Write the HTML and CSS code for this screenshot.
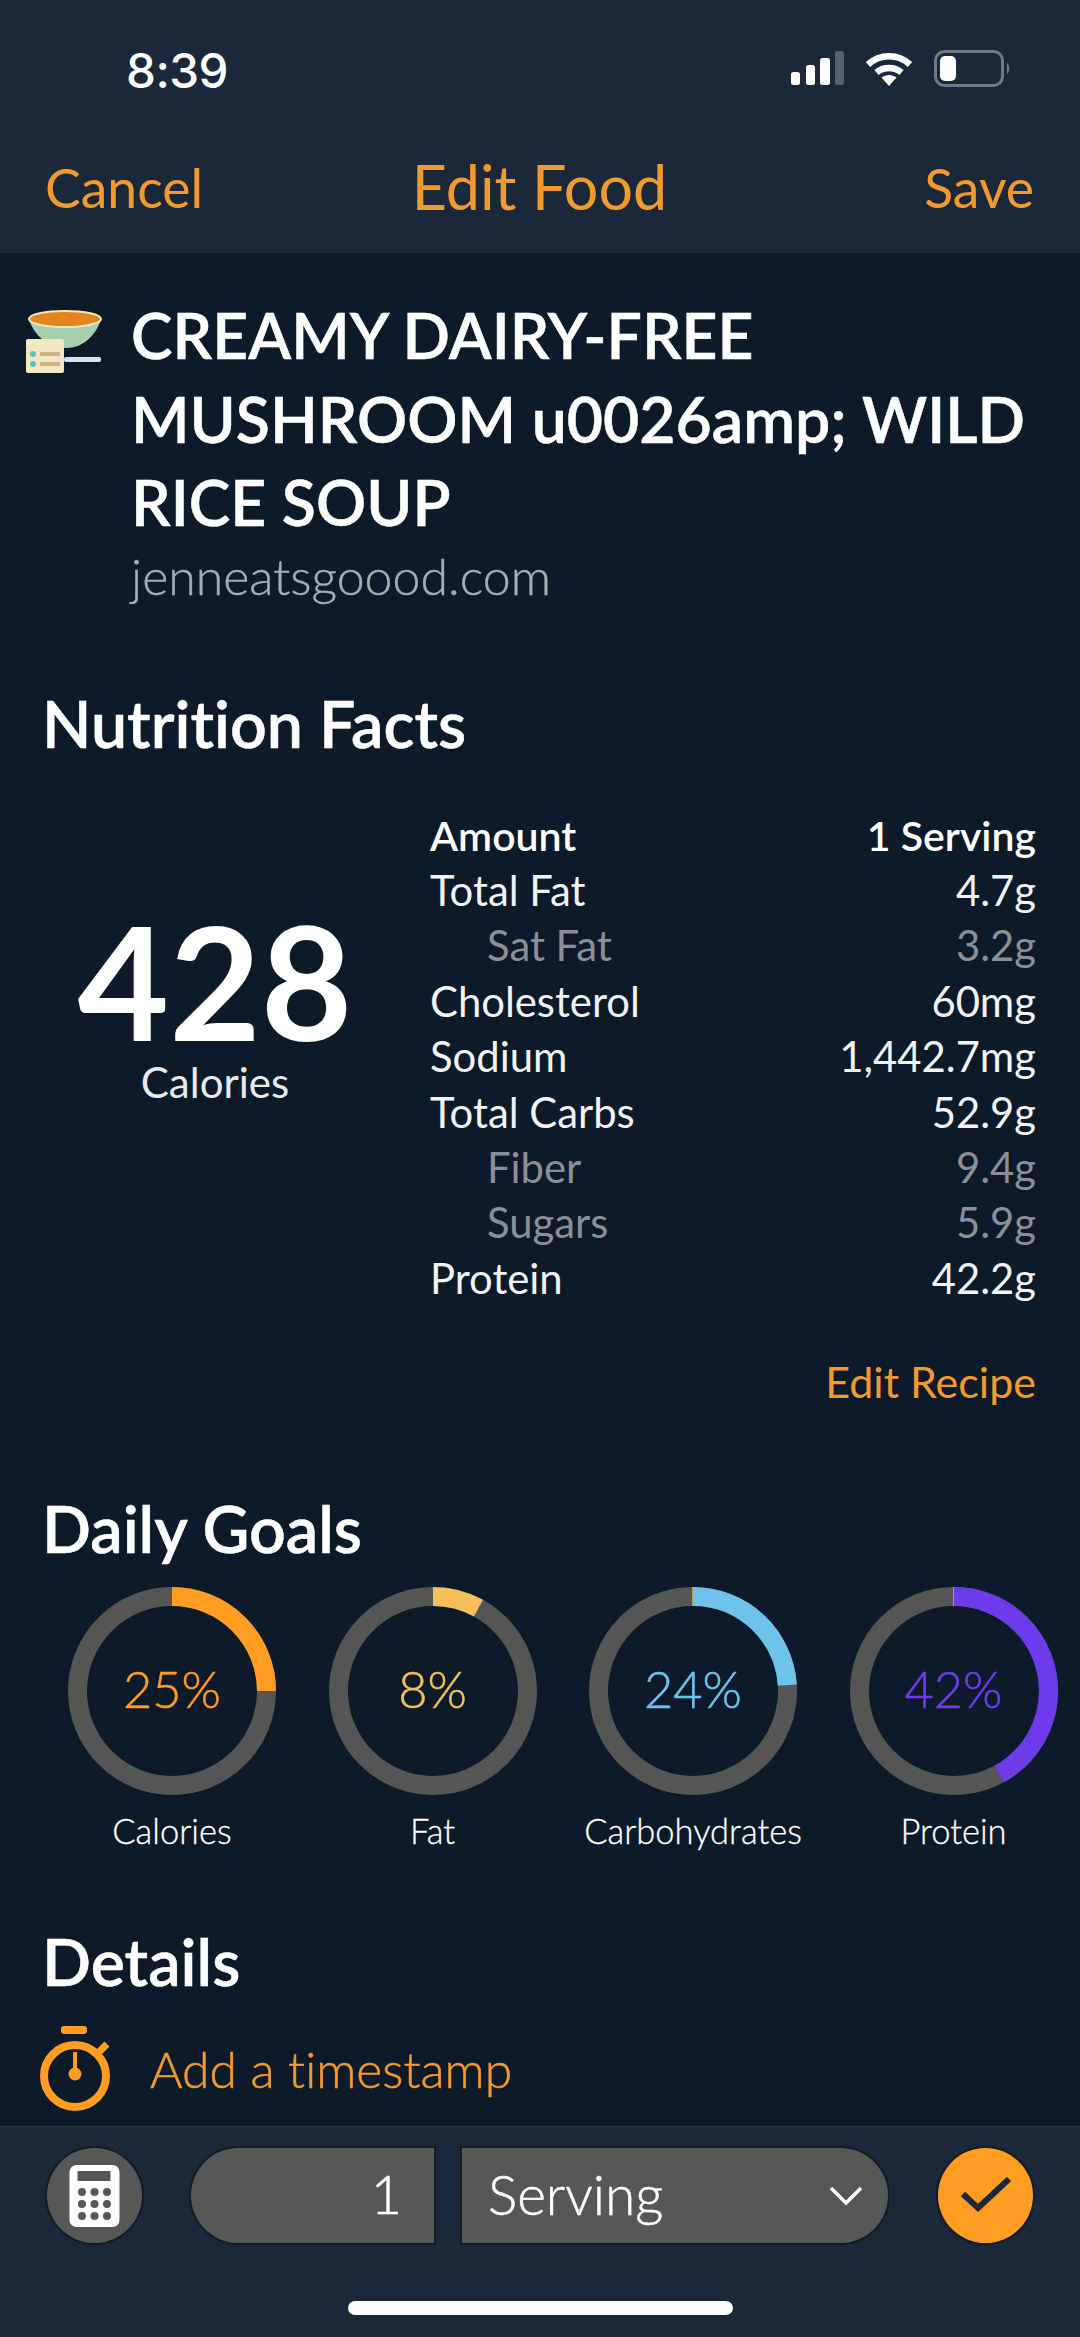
FILE: index.html
```html
<!DOCTYPE html>
<html lang="en">
<head>
<meta charset="utf-8">
<title>Edit Food</title>
<link rel="stylesheet" href="styles.css">
</head>
<body>
<div class="screen">
  <header class="top">
    <div class="status">
      <span class="time">8:39</span>
      <div class="status-icons">
        <svg class="signal" width="53" height="36" viewBox="0 0 53 36"><rect x="0" y="21" width="9" height="13" rx="2.5" fill="#fff"/><rect x="15" y="14" width="9" height="20" rx="2.5" fill="#fff"/><rect x="29" y="7" width="10" height="27" rx="2.5" fill="#fff"/><rect x="44" y="0" width="9" height="34" rx="2.5" fill="#56626f"/></svg>
        <svg class="wifi" width="48" height="36" viewBox="0 0 48 36"><path d="M3 13.500C15 2.500 33 2.500 45 13.500" fill="none" stroke="#fff" stroke-width="6.500"/><path d="M11.500 21.500C18.500 15.500 29.500 15.500 36.500 21.500" fill="none" stroke="#fff" stroke-width="6.500"/><path d="M16.500 26.500C21 23 27 23 31.500 26.500L24 35Z" fill="#fff"/></svg>
        <svg class="battery" width="77" height="38" viewBox="0 0 77 38"><rect x="1.500" y="1.500" width="67" height="34" rx="9" fill="none" stroke="#6f7a87" stroke-width="3"/><rect x="6" y="6" width="16" height="25" rx="5" fill="#fff"/><path d="M73 13C76 15 76 22 73 24Z" fill="#6f7a87"/></svg>
      </div>
    </div>
    <nav class="nav">
      <span class="nav-side">Cancel</span>
      <span class="nav-title">Edit Food</span>
      <span class="nav-side nav-right">Save</span>
    </nav>
  </header>

  <main class="content">
    <section class="recipe">
      <svg class="bowl" width="90" height="66" viewBox="0 0 90 66">
        <path d="M3 12C9 28 22 40 40 40C57 40 69 28 75 12Z" fill="#a6cfae"/>
        <ellipse cx="39" cy="11" rx="36" ry="8" fill="#e2851c" stroke="#f3e6bd" stroke-width="2"/>
        <rect x="38" y="49" width="37" height="5" rx="2" fill="#d6e2ee"/>
        <rect x="0" y="31" width="38" height="34" rx="2" fill="#f3e7c6"/>
        <circle cx="7" cy="46" r="3" fill="#5cc0c4"/><circle cx="7" cy="56" r="3" fill="#5cc0c4"/>
        <rect x="14" y="44" width="20" height="4" fill="#cdb57f"/><rect x="14" y="54" width="20" height="4" fill="#cdb57f"/>
      </svg>
      <div class="recipe-text">
        <h1 class="recipe-title">CREAMY DAIRY-FREE MUSHROOM u0026amp; WILD RICE SOUP</h1>
        <p class="recipe-source">jenneatsgoood.com</p>
      </div>
    </section>

    <h2 class="heading heading-facts">Nutrition Facts</h2>
    <section class="facts">
      <div class="calories">
        <span class="cal-num">428</span>
        <span class="cal-label">Calories</span>
      </div>
      <div class="table">
        <div class="row row-head"><span>Amount</span><span>1 Serving</span></div>
        <div class="row"><span>Total Fat</span><span>4.7g</span></div>
        <div class="row row-sub"><span>Sat Fat</span><span>3.2g</span></div>
        <div class="row"><span>Cholesterol</span><span>60mg</span></div>
        <div class="row"><span>Sodium</span><span>1,442.7mg</span></div>
        <div class="row"><span>Total Carbs</span><span>52.9g</span></div>
        <div class="row row-sub"><span>Fiber</span><span>9.4g</span></div>
        <div class="row row-sub"><span>Sugars</span><span>5.9g</span></div>
        <div class="row"><span>Protein</span><span>42.2g</span></div>
      </div>
    </section>
    <div class="edit-recipe">Edit Recipe</div>

    <h2 class="heading heading-goals">Daily Goals</h2>
    <section class="goals">
      <div class="goal">
        <div class="ring">
          <svg width="208" height="208" viewBox="0 0 208 208"><circle class="track" cx="104" cy="104" r="94.500"/><circle class="arc" cx="104" cy="104" r="94.500" pathLength="100" stroke="#ff9c22" stroke-dasharray="25 100" transform="rotate(-90 104 104)"/></svg>
          <span class="pct pct-cal">25%</span>
        </div>
        <span class="goal-label">Calories</span>
      </div>
      <div class="goal">
        <div class="ring">
          <svg width="208" height="208" viewBox="0 0 208 208"><circle class="track" cx="104" cy="104" r="94.500"/><circle class="arc" cx="104" cy="104" r="94.500" pathLength="100" stroke="#f5bf5a" stroke-dasharray="8 100" transform="rotate(-90 104 104)"/></svg>
          <span class="pct pct-fat">8%</span>
        </div>
        <span class="goal-label">Fat</span>
      </div>
      <div class="goal">
        <div class="ring">
          <svg width="208" height="208" viewBox="0 0 208 208"><circle class="track" cx="104" cy="104" r="94.500"/><circle class="arc" cx="104" cy="104" r="94.500" pathLength="100" stroke="#6ec3ec" stroke-dasharray="24 100" transform="rotate(-90 104 104)"/><path class="tick" d="M103.500 0V19"/></svg>
          <span class="pct pct-carb">24%</span>
        </div>
        <span class="goal-label">Carbohydrates</span>
      </div>
      <div class="goal">
        <div class="ring">
          <svg width="208" height="208" viewBox="0 0 208 208"><circle class="track" cx="104" cy="104" r="94.500"/><circle class="arc" cx="104" cy="104" r="94.500" pathLength="100" stroke="#6e3bea" stroke-dasharray="42 100" transform="rotate(-90 104 104)"/><path class="tick" d="M103.500 0V19"/></svg>
          <span class="pct pct-pro">42%</span>
        </div>
        <span class="goal-label">Protein</span>
      </div>
    </section>

    <h2 class="heading heading-details">Details</h2>
    <div class="timestamp">
      <svg class="watch" width="74" height="86" viewBox="0 0 74 86">
        <rect x="23" y="0" width="26" height="8" rx="3" fill="#ff9c22"/>
        <circle cx="37" cy="50" r="31" fill="none" stroke="#ff9c22" stroke-width="8"/>
        <path d="M61 26L69 18" stroke="#ff9c22" stroke-width="7" fill="none"/>
        <rect x="35" y="26" width="4" height="22" fill="#ff9c22"/>
        <circle cx="37" cy="48" r="6.500" fill="#ff9c22"/>
      </svg>
      <span class="timestamp-text">Add a timestamp</span>
    </div>
  </main>

  <footer class="bottom">
    <div class="controls">
      <div class="round calc">
        <svg width="51" height="62" viewBox="0 0 50 62">
          <rect width="50" height="62" rx="7" fill="#fff"/>
          <rect x="8" y="6" width="33" height="10" fill="#575757"/>
          <g fill="#575757">
            <circle cx="12.500" cy="27" r="4"/><circle cx="25" cy="27" r="4"/><circle cx="37.500" cy="27" r="4"/>
            <circle cx="12.500" cy="39" r="4"/><circle cx="25" cy="39" r="4"/><circle cx="37.500" cy="39" r="4"/>
            <circle cx="12.500" cy="51" r="4"/><circle cx="25" cy="51" r="4"/><circle cx="37.500" cy="51" r="4"/>
          </g>
        </svg>
      </div>
      <div class="qty">1</div>
      <div class="unit">
        <span class="unit-text">Serving</span>
        <svg width="34" height="22" viewBox="0 0 34 22"><path d="M2 3L17 18L32 3" fill="none" stroke="#fff" stroke-width="3.500"/></svg>
      </div>
      <div class="round confirm">
        <svg width="52" height="40" viewBox="0 0 52 40"><path d="M3 18L18 32L49 3" fill="none" stroke="#1a2839" stroke-width="6"/></svg>
      </div>
    </div>
    <div class="home-bar"></div>
  </footer>
</div>
</body>
</html>
```
FILE: styles.css
```css
* { box-sizing: border-box; margin: 0; padding: 0; }
html, body { width: 1080px; height: 2337px; overflow: hidden; }
body { background: #0d1a2a; font-family: "Lato", "Liberation Sans", sans-serif; color: #fff; font-variant-ligatures: none; }
.screen { width: 1080px; height: 2337px; display: flex; flex-direction: column; }

.top { height: 253px; background: #1a2839; flex: none; }
.status { height: 152px; display: flex; align-items: flex-start; justify-content: space-between; padding: 50px 69px 0 126px; }
.time { font-family: "Inter", sans-serif; font-size: 47.500px; font-weight: 500; line-height: 42px; letter-spacing: -0.5px; }
.status-icons { display: flex; align-items: center; gap: 21px; }
.nav { height: 70px; display: grid; grid-template-columns: 1fr auto 1fr; align-items: center; padding: 0 46px 0 45px; color: #f29a2e; }
.nav-side { font-size: 53.500px; font-weight: 400; line-height: 70px; }
.nav-right { text-align: right; }
.nav-title { font-size: 61px; font-weight: 400; line-height: 70px; }

.content { flex: 1; min-height: 0; padding-top: 40px; overflow: hidden; }
.recipe { display: flex; padding-left: 26px; align-items: flex-start; gap: 15px; }
.bowl { margin-top: 15px; flex: none; }
.recipe-title { font-size: 62.500px; font-weight: 600; line-height: 83.500px; width: 930px; -webkit-text-stroke: 0.5px #fff; }
.recipe-source { font-size: 50px; font-weight: 300; color: #a8adb3; line-height: 60px; margin-top: 2px; -webkit-text-stroke: 0.4px #a8adb3; }

.heading { font-size: 64.500px; font-weight: 600; line-height: 70px; padding-left: 42px; -webkit-text-stroke: 0.5px #fff; }
.heading-facts { margin-top: 82px; }
.facts { display: flex; margin-top: 50px; padding-right: 44px; }
.calories { width: 430px; flex: none; display: flex; flex-direction: column; align-items: center; padding-top: 104px; }
.cal-num { font-size: 158px; font-weight: 700; line-height: 136px; }
.cal-label { font-size: 42px; font-weight: 400; line-height: 50px; color: #e8e9eb; margin-top: 9px; }
.table { flex: 1; }
.row { display: flex; justify-content: space-between; font-size: 41.800px; font-weight: 400; line-height: 55.400px; color: #f2f3f4; }
.row-head { font-weight: 600; color: #fff; font-size: 41px; }
.row-sub { padding-left: 57px; color: #8b9098; }
.edit-recipe { text-align: right; font-size: 43px; font-weight: 400; color: #f29a2e; line-height: 50px; padding-right: 44px; margin-top: 51px; }

.heading-goals { margin-top: 86px; }
.goals { display: flex; margin-top: 24px; padding-left: 68px; gap: 52.500px; }
.goal { width: 208px; flex: none; display: flex; flex-direction: column; align-items: center; }
.ring { width: 208px; height: 208px; position: relative; display: flex; align-items: center; justify-content: center; }
.ring svg { position: absolute; inset: 0; }
.track { fill: none; stroke: #555; stroke-width: 19; }
.arc { fill: none; stroke-width: 19; }
.tick { fill: none; stroke: #c9974f; stroke-width: 1; }
.pct { font-size: 50.500px; font-weight: 300; padding-bottom: 5px; -webkit-text-stroke: 0.5px currentColor; }
.pct-cal { color: #ff9c22; }
.pct-fat { color: #f5bf5a; }
.pct-carb { color: #6ec3ec; }
.pct-pro { color: #6e3bea; }
.goal-label { font-size: 34.500px; font-weight: 300; line-height: 40px; margin-top: 16px; white-space: nowrap; -webkit-text-stroke: 0.3px #fff; }

.heading-details { margin-top: 75px; }
.timestamp { display: flex; align-items: center; padding-left: 38px; gap: 38px; margin-top: 30px; }
.watch { flex: none; }
.timestamp-text { font-size: 49.800px; font-weight: 300; color: #f29a2e; -webkit-text-stroke: 0.5px #f29a2e; }

.bottom { height: 211px; flex: none; background: #1a2839; border-top: 1px solid #25354a; }
.controls { display: flex; align-items: center; height: 95px; margin-top: 21px; padding-left: 47px; }
.round { width: 95px; height: 95px; border-radius: 50%; display: flex; align-items: center; justify-content: center; flex: none; box-shadow: 0 0 0 2px #111c28; }
.calc { background: #575757; }
.qty { width: 243px; height: 95px; margin-left: 49px; background: #575757; border-radius: 48px 0 0 48px; font-size: 54px; font-weight: 300; line-height: 92px; text-align: right; padding-right: 32px; box-shadow: 0 0 0 2px #111c28; -webkit-text-stroke: 0.5px #fff; }
.unit { width: 426px; height: 95px; margin-left: 28px; background: #575757; border-radius: 0 48px 48px 0; display: flex; align-items: center; justify-content: space-between; padding: 0 25px 0 26px; font-size: 55px; font-weight: 300; box-shadow: 0 0 0 2px #111c28; -webkit-text-stroke: 0.5px #fff; }
.unit-text { padding-bottom: 4px; }
.confirm { background: #ff9c22; margin-left: 50px; }
.home-bar { width: 385px; height: 14px; background: #fff; border-radius: 7px; margin: 58px 0 0 348px; }
```
